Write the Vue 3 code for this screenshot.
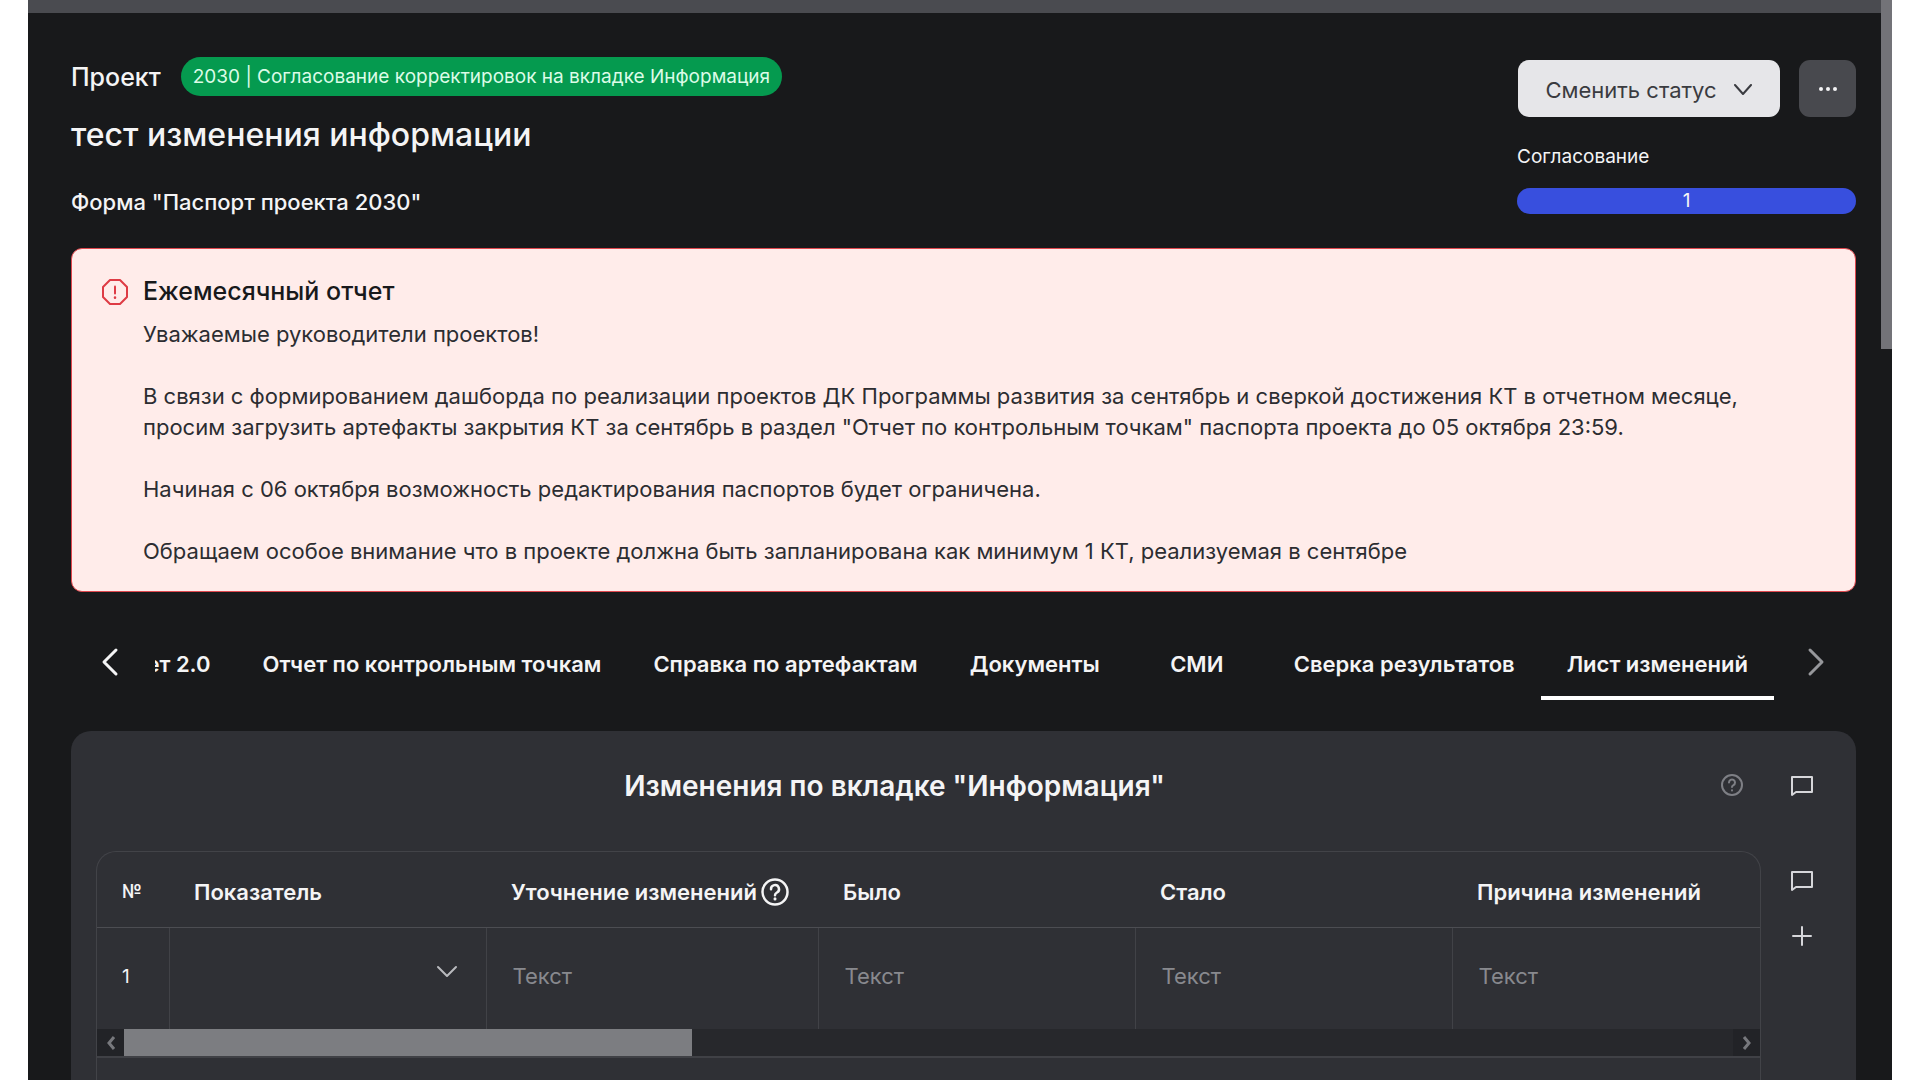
<script setup>
import { ref } from 'vue'

const tabs = ['Отчет 2.0', 'Отчет по контрольным точкам', 'Справка по артефактам', 'Документы', 'СМИ', 'Сверка результатов', 'Лист изменений']
const activeTab = ref('Лист изменений')

const textColumns = ['Уточнение изменений', 'Было', 'Стало', 'Причина изменений']
const rows = ref([{ indicator: '', values: ['', '', '', ''] }])

function addRow() {
  rows.value.push({ indicator: '', values: ['', '', '', ''] })
}
</script>

<template>
  <div class="window">
    <div class="screen">
      <div class="topbar"></div>
      <main class="content">
        <header class="head">
          <div class="head-main">
            <div class="kind-row">
              <span class="kind">Проект</span>
              <span class="badge">2030 | Согласование корректировок на вкладке Информация</span>
            </div>
            <h1 class="title">тест изменения информации</h1>
            <p class="form-name">Форма "Паспорт проекта 2030"</p>
          </div>
          <div class="head-side">
            <div class="actions">
              <button class="btn-status" type="button">
                Сменить статус
                <svg width="20" height="12" viewBox="0 0 20 12" fill="none" stroke="currentColor" stroke-width="2" stroke-linecap="round" stroke-linejoin="round"><path d="M2 1l8 9 8-9" /></svg>
              </button>
              <button class="btn-more" type="button" aria-label="Ещё">
                <svg width="18" height="4" viewBox="0 0 18 4" fill="currentColor"><circle cx="2" cy="2" r="2" /><circle cx="9" cy="2" r="2" /><circle cx="16" cy="2" r="2" /></svg>
              </button>
            </div>
            <div class="stage-label">Согласование</div>
            <div class="stage-bar">1</div>
          </div>
        </header>

        <section class="alert" role="alert">
          <svg class="alert-icon" width="28" height="28" viewBox="0 0 28 28" fill="none" stroke="currentColor" stroke-width="2" stroke-linejoin="round" stroke-linecap="round">
            <path d="M9 2h10l7 7v10l-7 7H9l-7-7V9z" /><path d="M14 8.500v7" /><path d="M14 19.500v.2" stroke-width="2.500" />
          </svg>
          <div class="alert-body">
            <h2>Ежемесячный отчет</h2>
            <p>Уважаемые руководители проектов!</p>
            <p>В связи с формированием дашборда по реализации проектов ДК Программы развития за сентябрь и сверкой достижения КТ в отчетном месяце,<br />просим загрузить артефакты закрытия КТ за сентябрь в раздел "Отчет по контрольным точкам" паспорта проекта до 05 октября 23:59.</p>
            <p>Начиная с 06 октября возможность редактирования паспортов будет ограничена.</p>
            <p>Обращаем особое внимание что в проекте должна быть запланирована как минимум 1 КТ, реализуемая в сентябре</p>
          </div>
        </section>

        <nav class="tabs">
          <button class="tab-arrow" type="button" aria-label="Назад">
            <svg width="18" height="30" viewBox="0 0 18 30" fill="none" stroke="currentColor" stroke-width="3" stroke-linecap="round" stroke-linejoin="round"><path d="M15 3L3 15l12 12" /></svg>
          </button>
          <div class="tab-list" role="tablist">
            <button v-for="tab in tabs" :key="tab" class="tab" :class="{ active: tab === activeTab }" type="button" role="tab" :aria-selected="tab === activeTab" @click="activeTab = tab">{{ tab }}</button>
          </div>
          <button class="tab-arrow next" type="button" aria-label="Вперёд">
            <svg width="18" height="30" viewBox="0 0 18 30" fill="none" stroke="currentColor" stroke-width="3" stroke-linecap="round" stroke-linejoin="round"><path d="M3 3l12 12L3 27" /></svg>
          </button>
        </nav>

        <section class="panel">
          <div class="panel-head">
            <h2>Изменения по вкладке "Информация"</h2>
            <button class="icon-btn muted" type="button" aria-label="Справка">
              <svg width="24" height="24" viewBox="0 0 24 24" fill="none" stroke="currentColor" stroke-width="2" stroke-linecap="round"><circle cx="12" cy="12" r="10" /><path d="M9 9.500a3 3 0 1 1 4.500 2.600c-1 .6-1.500 1-1.500 2" /><path d="M12 17.300v.1" /></svg>
            </button>
            <button class="icon-btn" type="button" aria-label="Комментарий">
              <svg width="26" height="24" viewBox="0 0 26 24" fill="none" stroke="currentColor" stroke-width="2" stroke-linejoin="round"><path d="M3 4h20v15H7l-4 3z" /></svg>
            </button>
          </div>
          <div class="panel-body">
            <div class="table-box">
              <table>
                <colgroup><col class="c-num" /><col class="c-text" /><col class="c-wide" /><col class="c-text" /><col class="c-text" /><col /></colgroup>
                <thead>
                  <tr>
                    <th class="num" scope="col">№</th>
                    <th scope="col">Показатель</th>
                    <th v-for="(name, i) in textColumns" :key="name" scope="col">
                      <span class="th-label">{{ name }}
                        <svg v-if="i === 0" width="30" height="30" viewBox="0 0 30 30" fill="none" stroke="currentColor" stroke-width="2.500" stroke-linecap="round"><circle cx="15" cy="15" r="12.500" /><path d="M11 12.200a4 4 0 1 1 6 3.300c-1.400.9-2 1.400-2 2.700" /><path d="M15 21.800v.1" stroke-width="3" /></svg>
                      </span>
                    </th>
                  </tr>
                </thead>
                <tbody>
                  <tr v-for="(row, r) in rows" :key="r">
                    <td class="num">{{ r + 1 }}</td>
                    <td>
                      <div class="select-wrap">
                        <select v-model="row.indicator" aria-label="Показатель"><option value=""></option></select>
                        <svg width="22" height="14" viewBox="0 0 22 14" fill="none" stroke="currentColor" stroke-width="2" stroke-linecap="round" stroke-linejoin="round"><path d="M2 2l9 9 9-9" /></svg>
                      </div>
                    </td>
                    <td v-for="(name, i) in textColumns" :key="name">
                      <input v-model="row.values[i]" type="text" placeholder="Текст" :aria-label="name" />
                    </td>
                  </tr>
                </tbody>
              </table>
              <div class="hscroll">
                <button type="button" aria-label="Прокрутить влево"><svg width="10" height="16" viewBox="0 0 10 16" fill="none" stroke="currentColor" stroke-width="3"><path d="M8 2L3 8l5 6" /></svg></button>
                <div class="hscroll-track"><div class="hscroll-thumb"></div></div>
                <button type="button" aria-label="Прокрутить вправо"><svg width="10" height="16" viewBox="0 0 10 16" fill="none" stroke="currentColor" stroke-width="3"><path d="M2 2l5 6-5 6" /></svg></button>
              </div>
            </div>
            <div class="row-tools">
              <button class="icon-btn" type="button" aria-label="Комментарий к таблице">
                <svg width="26" height="24" viewBox="0 0 26 24" fill="none" stroke="currentColor" stroke-width="2" stroke-linejoin="round"><path d="M3 4h20v15H7l-4 3z" /></svg>
              </button>
              <button class="icon-btn" type="button" aria-label="Добавить строку" @click="addRow">
                <svg width="24" height="24" viewBox="0 0 24 24" fill="none" stroke="currentColor" stroke-width="2" stroke-linecap="round"><path d="M12 3v18M3 12h18" /></svg>
              </button>
            </div>
          </div>
        </section>
      </main>
    </div>
    <div class="vscroll"><div class="vscroll-thumb"></div></div>
  </div>
</template>

<style>
body {
  margin: 0;
  background: #fff;
}
</style>

<style scoped>
.window {
  display: flex;
  height: 100vh;
  margin: 0 28px;
  overflow: hidden;
  background: #18191b;
  color: #f4f4f5;
  font-family: Inter, "Liberation Sans", sans-serif;
}
.window * {
  box-sizing: border-box;
}
button,
input,
select {
  font: inherit;
  color: inherit;
  background: none;
  border: 0;
  padding: 0;
  margin: 0;
}
h1,
h2,
p {
  margin: 0;
}
svg {
  display: block;
  flex: none;
}
.screen {
  flex: 1;
  min-width: 0;
  display: flex;
  flex-direction: column;
}
.topbar {
  flex: none;
  height: 13px;
  background: #4a4b50;
}
.vscroll {
  flex: none;
  width: 11px;
}
.vscroll-thumb {
  height: 349px;
  background: #737378;
}
.content {
  flex: 1;
  display: flex;
  flex-direction: column;
  padding: 44px 25px 0 43px;
}

.head {
  display: flex;
  justify-content: space-between;
}
.kind-row {
  display: flex;
  align-items: center;
  gap: 20px;
  height: 39px;
}
.kind {
  font-size: 25px;
  font-weight: 500;
}
.badge {
  height: 39px;
  padding: 0 12px;
  border-radius: 20px;
  background: #059a4f;
  color: #dcfce7;
  font-size: 19px;
  line-height: 40px;
}
.title {
  margin-top: 19px;
  font-size: 32px;
  font-weight: 500;
  line-height: 40px;
}
.form-name {
  margin-top: 33px;
  font-size: 22px;
  font-weight: 500;
  line-height: 28px;
}
.head-side {
  width: 339px;
  padding-top: 3px;
}
.actions {
  display: flex;
  justify-content: space-between;
}
.btn-status {
  display: flex;
  align-items: center;
  justify-content: center;
  gap: 16px;
  width: 262px;
  height: 57px;
  margin-left: 1px;
  padding-top: 2px;
  border-radius: 11px;
  background: #e6e6e9;
  color: #3a3b40;
  font-size: 22px;
}
.btn-more {
  display: flex;
  align-items: center;
  justify-content: center;
  width: 57px;
  height: 57px;
  border-radius: 11px;
  background: #48494e;
}
.stage-label {
  margin-top: 28px;
  font-size: 19px;
  line-height: 24px;
}
.stage-bar {
  margin-top: 19px;
  height: 26px;
  border-radius: 13px;
  background: #384fde;
  font-size: 19px;
  line-height: 26px;
  text-align: center;
}

.alert {
  display: flex;
  gap: 14px;
  margin-top: 32px;
  padding: 26px 29px 24px;
  border: 1px solid #e0484e;
  border-radius: 11px;
  background: #ffecea;
  color: #2c2d31;
}
.alert-icon {
  margin-top: 3px;
  color: #de3b45;
}
.alert-body h2 {
  margin-bottom: 12px;
  color: #18191b;
  font-size: 25px;
  font-weight: 500;
  line-height: 32px;
}
.alert-body p {
  font-size: 22px;
  line-height: 31px;
  white-space: nowrap;
}
.alert-body p + p {
  margin-top: 31px;
}

.tabs {
  display: flex;
  justify-content: space-between;
  margin: 35px 31px 0 30px;
  height: 73px;
}
.tab-arrow {
  height: 70px;
}
.tab-arrow.next {
  color: #96979b;
}
.tab-list {
  flex: 1;
  display: flex;
  justify-content: flex-end;
  margin: 0 33px 0 36px;
  overflow: hidden;
}
.tab {
  flex: none;
  min-width: 142px;
  padding: 4px 26px 0;
  border-bottom: 4px solid transparent;
  font-size: 22px;
  font-weight: 600;
  white-space: nowrap;
}
.tab.active {
  border-bottom-color: #fff;
}

.panel {
  flex: 1 0 auto;
  display: flex;
  flex-direction: column;
  margin-top: 31px;
  padding: 36px 25px 0;
  border-radius: 20px 20px 0 0;
  background: #2f3035;
}
.panel-head {
  display: flex;
  align-items: center;
  gap: 44px;
  padding-right: 16px;
  height: 36px;
}
.panel-head h2 {
  flex: 1;
  padding: 2px 0 0 18px;
  font-size: 28px;
  font-weight: 600;
  text-align: center;
}
.icon-btn {
  display: flex;
  align-items: center;
  justify-content: center;
  width: 26px;
  height: 26px;
  color: #d6d6da;
}
.icon-btn.muted {
  color: #7e7f85;
}
.panel-body {
  flex: 1;
  display: flex;
  gap: 28px;
  margin-top: 48px;
  padding-right: 16px;
}
.table-box {
  flex: 1;
  min-width: 0;
  border: 1px solid #424348;
  border-bottom: 0;
  border-radius: 20px 20px 0 0;
}
table {
  width: 100%;
  table-layout: fixed;
  border-collapse: collapse;
}
.c-num {
  width: 72px;
}
.c-text {
  width: 317px;
}
.c-wide {
  width: 332px;
}
th {
  height: 75px;
  padding: 5px 25px 0;
  border-bottom: 1px solid #4c4d52;
  font-size: 22px;
  font-weight: 600;
  text-align: left;
  white-space: nowrap;
}
th.num {
  font-size: 18px;
}
.th-label {
  display: flex;
  align-items: center;
  gap: 3px;
}
td {
  height: 102px;
  padding: 0 26px 5px;
  border-left: 1px solid #414247;
  font-size: 22px;
}
td.num {
  padding: 0 25px 3px;
  border-left: 0;
  font-size: 19px;
}
td input {
  display: block;
  width: 100%;
  height: 40px;
}
td input::placeholder {
  color: #88898e;
  opacity: 1;
}
.select-wrap {
  position: relative;
  color: #b9babe;
}
.select-wrap select {
  display: block;
  width: 100%;
  height: 40px;
  appearance: none;
}
.select-wrap svg {
  position: absolute;
  right: 2px;
  top: 9px;
  pointer-events: none;
}
.hscroll {
  display: flex;
  height: 29px;
  border-bottom: 2px solid #404146;
  background: #27282c;
}
.hscroll button {
  display: flex;
  align-items: center;
  justify-content: center;
  width: 27px;
  background: #222327;
  color: #77787d;
}
.hscroll-track {
  flex: 1;
}
.hscroll-thumb {
  width: 35.3%;
  height: 100%;
  background: #7c7d81;
}
.row-tools {
  display: flex;
  flex-direction: column;
  gap: 30px;
  padding-top: 16px;
}
</style>
